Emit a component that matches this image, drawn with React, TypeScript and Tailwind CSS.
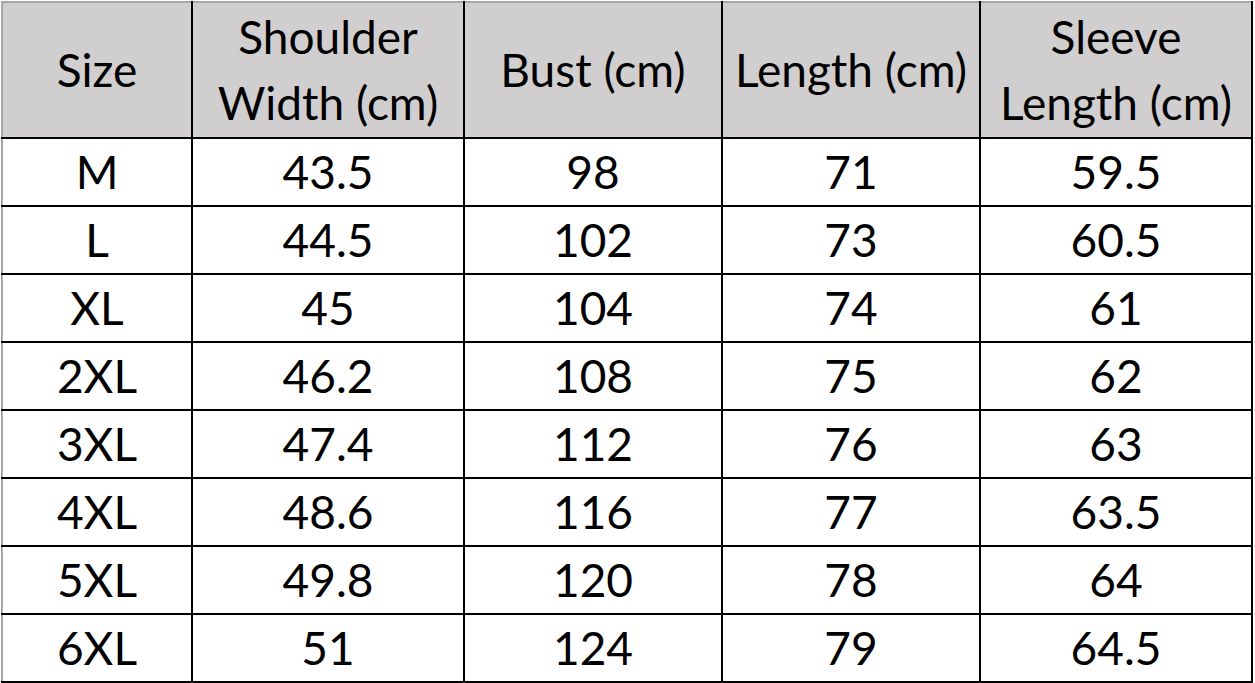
const headers = [
  ['Size'],
  ['Shoulder', 'Width (cm)'],
  ['Bust (cm)'],
  ['Length (cm)'],
  ['Sleeve', 'Length (cm)'],
];

const rows = [
  ['M', '43.5', '98', '71', '59.5'],
  ['L', '44.5', '102', '73', '60.5'],
  ['XL', '45', '104', '74', '61'],
  ['2XL', '46.2', '108', '75', '62'],
  ['3XL', '47.4', '112', '76', '63'],
  ['4XL', '48.6', '116', '77', '63.5'],
  ['5XL', '49.8', '120', '78', '64'],
  ['6XL', '51', '124', '79', '64.5'],
];

const colWidths = ['w-[190px]', 'w-[272px]', 'w-[258px]', 'w-[258px]', 'w-[272px]'];

export default function App() {
  return (
    <div className="w-[1255px] h-[683px] bg-white pl-[1px] pt-[1px] overflow-hidden font-['Lato','Open_Sans',sans-serif] text-black">
      <table className="table-fixed border-collapse w-[1252px]">
        <colgroup>
          {colWidths.map((w, i) => (
            <col key={i} className={w} />
          ))}
        </colgroup>
        <thead>
          <tr className="h-[136px] bg-[#d0cece]">
            {headers.map((h, i) => (
              <th
                key={i}
                className={
                  'p-0 font-normal text-[46px] leading-[66px] whitespace-nowrap text-center align-middle border-2 border-black border-t-[#a6a6a6] ' +
                  (i === 0 ? 'border-l-[#a6a6a6]' : '')
                }
              >
                {h.map((line, j) => (
                  <div key={j}>{line}</div>
                ))}
              </th>
            ))}
          </tr>
        </thead>
        <tbody>
          {rows.map((r, ri) => (
            <tr key={ri} className="h-[68px]">
              {r.map((c, ci) => (
                <td
                  key={ci}
                  className={
                    'p-0 text-[46px] leading-none text-center align-middle border-2 border-black ' +
                    (ci === 0 ? 'border-l-[#a6a6a6]' : '')
                  }
                >
                  {c}
                </td>
              ))}
            </tr>
          ))}
        </tbody>
      </table>
    </div>
  );
}
